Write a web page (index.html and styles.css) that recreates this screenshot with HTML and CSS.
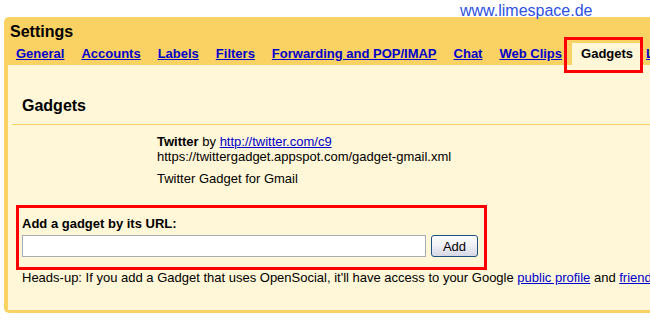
FILE: index.html
```html
<!DOCTYPE html>
<html lang="en">
<head>
    <meta charset="UTF-8">
    <title>Settings - Gadgets</title>
    <link rel="stylesheet" href="styles.css">
</head>
<body>
    <div class="watermark">www.limespace.de</div>

    <div class="panel">
        <div class="title">Settings</div>
        <div class="tabs">
            <a href="#">General</a>
            <a href="#">Accounts</a>
            <a href="#">Labels</a>
            <a href="#">Filters</a>
            <a href="#">Forwarding and POP/IMAP</a>
            <a href="#">Chat</a>
            <a href="#">Web Clips</a>
            <span class="tab-active">Gadgets</span>
            <a href="#">Labs</a>
        </div>

        <div class="content">
            <div class="section-head">
                <h2>Gadgets</h2>
            </div>

            <div class="gadget">
                <div><b>Twitter</b> by <a href="#">http://twitter.com/c9</a></div>
                <div>https://twittergadget.appspot.com/gadget-gmail.xml</div>
                <div class="gadget-desc">Twitter Gadget for Gmail</div>
            </div>

            <div class="add-box">
                <label for="gadget-url">Add a gadget by its URL:</label>
                <div class="add-row">
                    <input type="text" id="gadget-url">
                    <button>Add</button>
                </div>
            </div>

            <p class="note">Heads-up: If you add a Gadget that uses OpenSocial, it'll have access to your Google <a href="#">public profile</a> and <a href="#">friends list</a>.</p>
        </div>
    </div>

    <!-- red marker drawn over the active tab -->
    <div class="tab-marker"></div>
</body>
</html>
```

FILE: styles.css
```css
body {
    margin: 0;
    height: 326px;
    overflow: hidden;
    background-color: #fff;
    font-family: "Liberation Sans", Arial, sans-serif;
    font-size: 13px;
    color: #000;
}
a {
    color: #0000cc;
}
.watermark {
    position: absolute;
    left: 460px;
    top: 1px;
    font-size: 16px;
    line-height: 20px;
    color: #2e52e0;
}
.panel {
    width: 700px;
    margin: 17px 0 0 4px;
    padding: 0 0 3px 4px;
    background-color: #fad163;
    border-radius: 5px 0 0 5px;
}
.title {
    padding: 5px 0 0 2px;
    font-size: 16px;
    font-weight: bold;
    line-height: 20px;
}
.tabs {
    display: flex;
    margin-top: 1px;
    padding-left: 8px;
    height: 22px;
    line-height: 22px;
    font-size: 13px;
    font-weight: bold;
    white-space: nowrap;
}
.tabs a {
    margin-right: 17px;
}
.tab-active {
    margin-left: -7px;
    margin-right: 4px;
    padding: 0 9px;
    background-color: #fff7d7;
}
.content {
    height: 245px;
    background-color: #fff7d7;
}
.section-head {
    margin-left: 4px;
    padding: 31px 0 8px 10px;
    border-bottom: 1px solid #fad163;
}
.section-head h2 {
    margin: 0;
    font-size: 16px;
    line-height: 20px;
}
.gadget {
    padding: 9px 0 0 149px;
    line-height: 15px;
}
.gadget-desc {
    margin-top: 7px;
}
.add-box {
    box-sizing: border-box;
    width: 471px;
    margin: 19px 0 0 8px;
    padding: 8px 0 10px 3px;
    border: 3px solid #ff0000;
}
.add-box label {
    display: block;
    font-weight: bold;
    line-height: 15px;
}
.add-row {
    display: flex;
    gap: 5px;
    margin-top: 4px;
}
.add-row input {
    box-sizing: border-box;
    width: 404px;
    height: 22px;
    margin: 0;
    padding: 0 3px;
    border: 1px solid #a5acb2;
    background-color: #fff;
}
.add-row button {
    box-sizing: border-box;
    width: 47px;
    height: 22px;
    margin: 0;
    padding: 0;
    border: 1px solid #1d4f80;
    border-radius: 3px;
    background: linear-gradient(#ffffff, #f0f0f6 45%, #d6d8e6);
    font-family: "Liberation Sans", Arial, sans-serif;
    font-size: 13px;
    color: #000;
}
.note {
    margin: 0 0 0 14px;
    line-height: 15px;
    white-space: nowrap;
}
.tab-marker {
    position: absolute;
    left: 564px;
    top: 37px;
    box-sizing: border-box;
    width: 79px;
    height: 36px;
    border: 3px solid #ff0000;
}
```
